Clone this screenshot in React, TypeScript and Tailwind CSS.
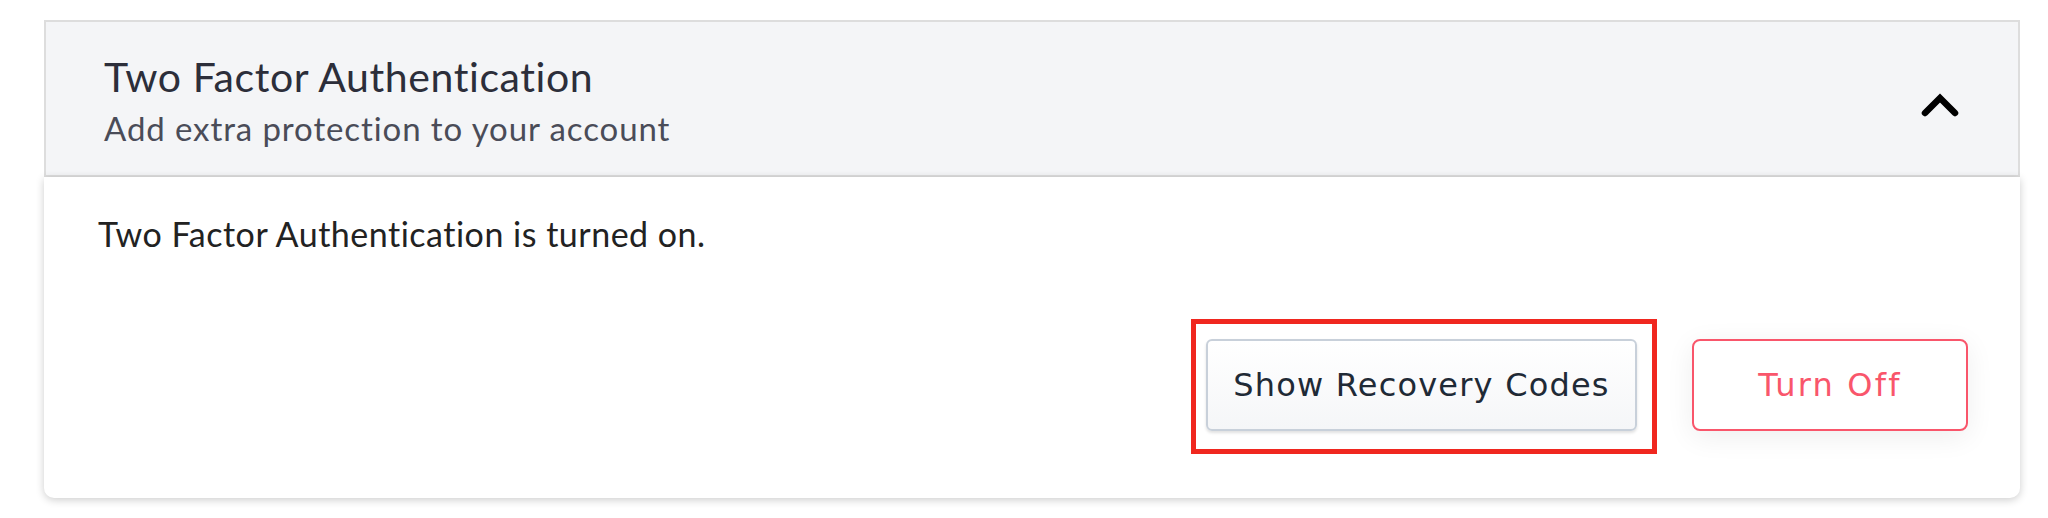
import React from "react";

export default function App() {
  return (
    <div className="w-[2048px] h-[518px] bg-white pt-[20px] pl-[44px]">
      <div className="w-[1976px] flex flex-col">
        <div className="h-[157px] bg-[#f4f5f7] border-2 border-[#dddddd] flex items-center justify-between pl-[58px] pr-[58px]">
          <div className="flex flex-col pt-[4px]" style={{ fontFamily: "Lato, 'Open Sans', sans-serif" }}>
            <div className="text-[41px] leading-[48px] tracking-[0.6px] text-[#2c2e3a]">Two Factor Authentication</div>
            <div className="text-[33px] leading-[40px] tracking-[0.9px] text-[#4a4c58] mt-[7px]">Add extra protection to your account</div>
          </div>
          <svg width="40" height="28" viewBox="0 0 40 28" className="mt-[12px]">
            <polyline points="5,22 20,7 35,22" fill="none" stroke="#000" strokeWidth="6.5" strokeLinecap="round" strokeLinejoin="miter" />
          </svg>
        </div>
        <div className="h-[321px] bg-white rounded-b-[10px] shadow-[0_2px_8px_rgba(0,0,0,0.2)] flex flex-col pl-[54px] pr-[52px] pt-[40px]">
          <div className="text-[34px] leading-[34px] tracking-[0.5px] text-[#222222]" style={{ fontFamily: "Lato, 'Open Sans', sans-serif" }}>
            Two Factor Authentication is turned on.
          </div>
          <div className="flex justify-end items-start mt-[68px]" style={{ fontFamily: "'DejaVu Sans', 'Noto Sans', sans-serif" }}>
            <div className="border-[5px] border-[#f0271f] pl-[10px] pr-[15px] pt-[15px] pb-[18px]">
              <div className="w-[431px] h-[92px] rounded-[6px] border-2 border-[#c8d0da] bg-gradient-to-b from-white to-[#f5f6f8] shadow-[0_2px_3px_rgba(0,0,0,0.12)] flex items-center justify-center text-[32px] tracking-[1.2px] text-[#1f2a36]">
                Show Recovery Codes
              </div>
            </div>
            <div className="ml-[35px] mt-[20px] w-[276px] h-[92px] rounded-[8px] border-2 border-[#f9566b] bg-white shadow-[0_6px_28px_rgba(0,0,0,0.07)] flex items-center justify-center text-[32px] tracking-[2.2px] text-[#f9566b]">
              Turn Off
            </div>
          </div>
        </div>
      </div>
    </div>
  );
}
